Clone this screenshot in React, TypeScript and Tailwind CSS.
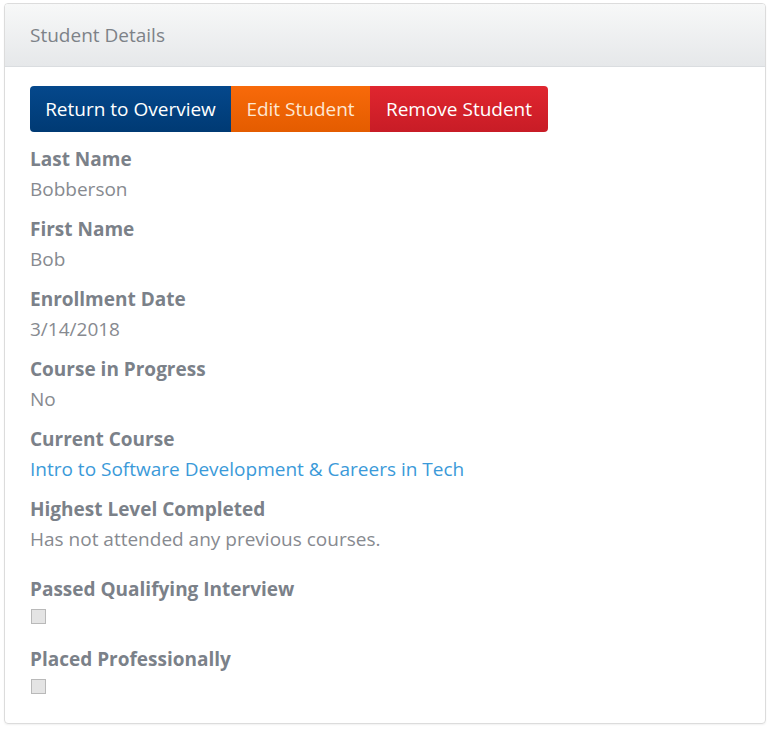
import React from "react";

const font = { fontFamily: '"Open Sans", "Noto Sans", Arial, sans-serif' };

function Field({ label, value, link }: { label: string; value: string; link?: boolean }) {
  return (
    <div className="mb-[10px]">
      <div className="h-[30px] leading-[30px] font-bold text-[#7b8189] text-[19px]">{label}</div>
      <div className={`h-[30px] leading-[30px] text-[19px] ${link ? "text-[#3b9ad9]" : "text-[#878a90]"}`}>{value}</div>
    </div>
  );
}

function Check({ label }: { label: string }) {
  return (
    <div>
      <div className="h-[30px] leading-[30px] font-bold text-[#7b8189] text-[19px]">{label}</div>
      <div className="h-[40px] pt-[5px]">
        <div className="ml-[1px] w-[15px] h-[15px] bg-[#e4e4e4] border border-[#b9b9b9]" />
      </div>
    </div>
  );
}

export default function App() {
  return (
    <div className="w-[770px] h-[732px] bg-white pt-[3px] pl-[4px]" style={font}>
      <div className="w-[762px] h-[721px] border border-[#dcdcdc] rounded-[4px] shadow-[0_1px_2px_rgba(0,0,0,0.06)] overflow-hidden">
        <div className="h-[63px] border-b border-[#dadde0] bg-gradient-to-b from-[#f7f8f8] to-[#e6e8ea] flex items-center pl-[25px] text-[19px] text-[#7d8288]">
          Student Details
        </div>
        <div className="pl-[25px] pt-[19px]">
          <div className="flex h-[46px] text-[19px] text-white mb-[12px]">
            <button className="w-[201px] rounded-l-[4px] bg-gradient-to-b from-[#05488c] to-[#003a74]">Return to Overview</button>
            <button className="w-[139px] bg-gradient-to-b from-[#f86a0a] to-[#e45c00] text-[#fde7d2]">Edit Student</button>
            <button className="w-[178px] rounded-r-[4px] bg-gradient-to-b from-[#e0262f] to-[#c81c26]">Remove Student</button>
          </div>
          <Field label="Last Name" value="Bobberson" />
          <Field label="First Name" value="Bob" />
          <Field label="Enrollment Date" value="3/14/2018" />
          <Field label="Course in Progress" value="No" />
          <Field label="Current Course" value="Intro to Software Development & Careers in Tech" link />
          <Field label="Highest Level Completed" value="Has not attended any previous courses." />
          <div className="h-[10px]" />
          <Check label="Passed Qualifying Interview" />
          <Check label="Placed Professionally" />
        </div>
      </div>
    </div>
  );
}
